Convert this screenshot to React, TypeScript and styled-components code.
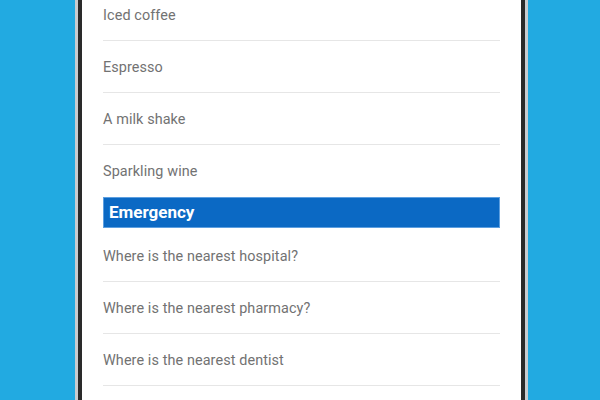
import React from "react";
import styled, { createGlobalStyle } from "styled-components";

const Global = createGlobalStyle`
  html, body { margin: 0; padding: 0; }
  body { width: 600px; height: 400px; overflow: hidden; background: #22aae1; font-family: Roboto, "Noto Sans", sans-serif; }
`;

const Stage = styled.div`
  display: flex;
  height: 400px;
  padding: 0 72px 0 75px;
  box-sizing: border-box;
  overflow: hidden;
`;

const Frame = styled.div`
  flex: 1;
  display: flex;
  border-left: 3px solid #c9cccf;
  border-right: 3px solid #c9cccf;
`;

const Screen = styled.div`
  flex: 1;
  background: #ffffff;
  border-left: 4px solid #2a2a2a;
  border-right: 4px solid #2a2a2a;
  padding: 0 21px;
  overflow: hidden;
`;

const List = styled.div`
  display: flex;
  flex-direction: column;
  margin-top: -11.5px;
`;

const Row = styled.div<{ $last?: boolean }>`
  height: 52px;
  box-sizing: border-box;
  display: flex;
  align-items: center;
  padding-top: 2px;
  flex-shrink: 0;
  border-bottom: ${(p) => (p.$last ? "none" : "1px solid #e6e6e6")};
  font-size: 14.4px;
  color: #727272;
  letter-spacing: 0.1px;
`;

const Header = styled.div`
  height: 31px;
  box-sizing: border-box;
  flex-shrink: 0;
  display: flex;
  align-items: center;
  padding-left: 5px;
  margin-bottom: 2px;
  background: #0b69c4;
  border: 1px solid #5d9fe0;
  color: #ffffff;
  font-weight: 700;
  font-size: 17px;
`;

const drinks = ["Iced coffee", "Espresso", "A milk shake", "Sparkling wine"];
const emergency = [
  "Where is the nearest hospital?",
  "Where is the nearest pharmacy?",
  "Where is the nearest dentist",
  "",
];

export default function App() {
  return (
    <>
      <Global />
      <Stage>
        <Frame>
          <Screen>
            <List>
              {drinks.map((d, i) => (
                <Row key={d} $last={i === drinks.length - 1}>
                  {d}
                </Row>
              ))}
              <Header>Emergency</Header>
              {emergency.map((d, i) => (
                <Row key={i}>{d}</Row>
              ))}
            </List>
          </Screen>
        </Frame>
      </Stage>
    </>
  );
}
